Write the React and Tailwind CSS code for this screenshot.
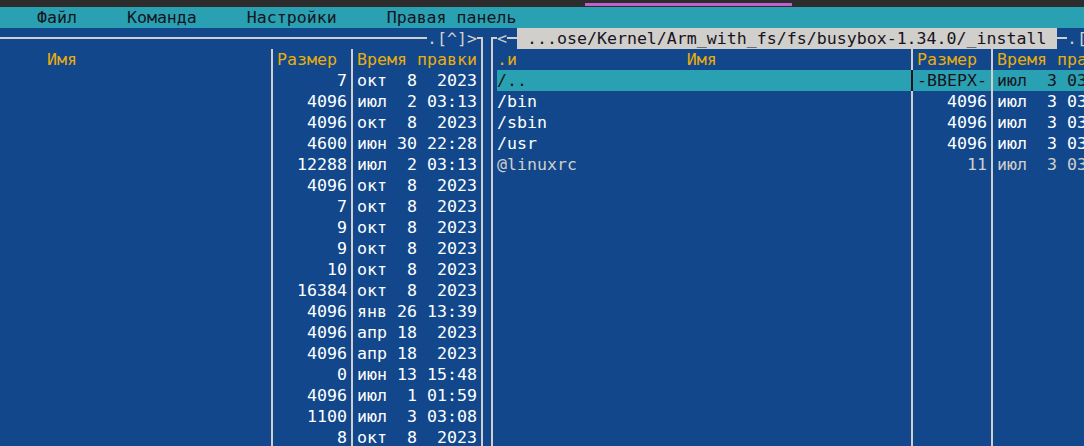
import React from 'react'

const LEFT_ROWS = [
  ['7', 'окт  8  2023'],
  ['4096', 'июл  2 03:13'],
  ['4096', 'окт  8  2023'],
  ['4600', 'июн 30 22:28'],
  ['12288', 'июл  2 03:13'],
  ['4096', 'окт  8  2023'],
  ['7', 'окт  8  2023'],
  ['9', 'окт  8  2023'],
  ['9', 'окт  8  2023'],
  ['10', 'окт  8  2023'],
  ['16384', 'окт  8  2023'],
  ['4096', 'янв 26 13:39'],
  ['4096', 'апр 18  2023'],
  ['4096', 'апр 18  2023'],
  ['0', 'июн 13 15:48'],
  ['4096', 'июл  1 01:59'],
  ['1100', 'июл  3 03:08'],
  ['8', 'окт  8  2023'],
]

const RIGHT_ROWS = [
  { name: '/..', size: '-ВВЕРХ-', date: 'июл  3 03:08', selected: true },
  { name: '/bin', size: '4096', date: 'июл  3 03:08' },
  { name: '/sbin', size: '4096', date: 'июл  3 03:08' },
  { name: '/usr', size: '4096', date: 'июл  3 03:08' },
  { name: '@linuxrc', size: '11', date: 'июл  3 03:08', dim: true },
]

function Sep({ bg = '', line = 'bg-[#d0cfcc]' }) {
  return (
    <div className={`w-[10px] h-full shrink-0 flex justify-center ${bg}`}>
      <div className={`w-[2px] h-full ${line}`} />
    </div>
  )
}

function HLine({ className = '' }) {
  return (
    <div className={`h-full ${className}`}>
      <div className="h-[2px] mt-[9px] bg-[#d0cfcc]" />
    </div>
  )
}

function LeftPanel() {
  return (
    <div className="w-[487px] shrink-0">
      {/* top border */}
      <div className="flex h-[21px] leading-[21px]">
        <HLine className="w-[427px]" />
        <div className="w-[50px] whitespace-pre text-[#d0cfcc]">.[^]&gt;</div>
        <div className="w-[10px]">
          <div className="w-[6px] h-[12px] mt-[9px] border-t-2 border-r-2 border-[#d0cfcc]" />
        </div>
      </div>

      {/* header */}
      <div className="flex h-[21px] leading-[21px] text-[#e9ad0c]">
        <div className="w-[267px] pl-[47px]">Имя</div>
        <Sep />
        <div className="w-[70px]">Размер</div>
        <Sep />
        <div className="w-[120px] whitespace-pre">Время правки</div>
        <Sep />
      </div>

      {LEFT_ROWS.map(([size, date], i) => (
        <div key={i} className="flex h-[21px] leading-[21px] text-[#ffffff]">
          <div className="w-[267px]" />
          <Sep />
          <div className="w-[70px] text-right">{size}</div>
          <Sep />
          <div className="w-[120px] whitespace-pre">{date}</div>
          <Sep />
        </div>
      ))}
    </div>
  )
}

function RightPanel() {
  const empty = Array.from({ length: 18 - RIGHT_ROWS.length })
  return (
    <div className="flex-1 min-w-0">
      {/* top border with path */}
      <div className="flex h-[21px] leading-[21px] whitespace-pre">
        <div className="w-[10px] shrink-0">
          <div className="ml-[4px] w-[6px] h-[12px] mt-[9px] border-t-2 border-l-2 border-[#d0cfcc]" />
        </div>
        <div className="w-[10px] shrink-0 text-[#d0cfcc]">&lt;</div>
        <HLine className="w-[10px] shrink-0" />
        <div className="w-[540px] shrink-0 bg-[#d0cfcc] text-[#171421]"> ...ose/Kernel/Arm_with_fs/fs/busybox-1.34.0/_install </div>
        <HLine className="w-[10px] shrink-0" />
        <div className="shrink-0 text-[#d0cfcc]">.[</div>
      </div>

      {/* header */}
      <div className="flex h-[21px] leading-[21px] text-[#e9ad0c] whitespace-pre">
        <Sep />
        <div className="w-[410px] shrink-0">.и                 Имя</div>
        <Sep />
        <div className="w-[70px] shrink-0">Размер</div>
        <Sep />
        <div className="flex-1 overflow-hidden">Время правки</div>
      </div>

      {RIGHT_ROWS.map((r) => {
        const text = r.selected ? 'text-[#171421]' : r.dim ? 'text-[#d0cfcc]' : 'text-[#ffffff]'
        const bg = r.selected ? 'bg-[#2aa1b3]' : ''
        return (
          <div key={r.name} className={`flex h-[21px] leading-[21px] whitespace-pre ${text}`}>
            <Sep />
            <div className={`w-[410px] shrink-0 ${bg}`}>{r.name}</div>
            <Sep bg={bg} line={r.selected ? 'bg-[#171421]' : 'bg-[#d0cfcc]'} />
            <div className={`w-[70px] shrink-0 text-right ${bg}`}>{r.size}</div>
            <Sep bg={bg} />
            <div className={`flex-1 overflow-hidden ${bg}`}>{r.date}</div>
          </div>
        )
      })}

      {empty.map((_, i) => (
        <div key={i} className="flex h-[21px]">
          <Sep />
          <div className="w-[410px] shrink-0" />
          <Sep />
          <div className="w-[70px] shrink-0" />
          <Sep />
          <div className="flex-1" />
        </div>
      ))}
    </div>
  )
}

export default function App() {
  return (
    <div className="w-[1084px] h-[446px] overflow-hidden bg-[#12488b] font-['DejaVu_Sans_Mono',monospace] text-[16.6px]">
      {/* window title strip */}
      <div className="h-[7px] bg-[#2c2c2c] pl-[585px] pt-[3px]">
        <div className="w-[207px] h-[3px] bg-[#c061cb]" />
      </div>

      {/* menu bar */}
      <div className="h-[21px] leading-[21px] bg-[#2aa1b3] text-[#171421] pl-[37px] whitespace-pre">
        Файл     Команда     Настройки     Правая панель
      </div>

      <div className="flex">
        <LeftPanel />
        <RightPanel />
      </div>
    </div>
  )
}
